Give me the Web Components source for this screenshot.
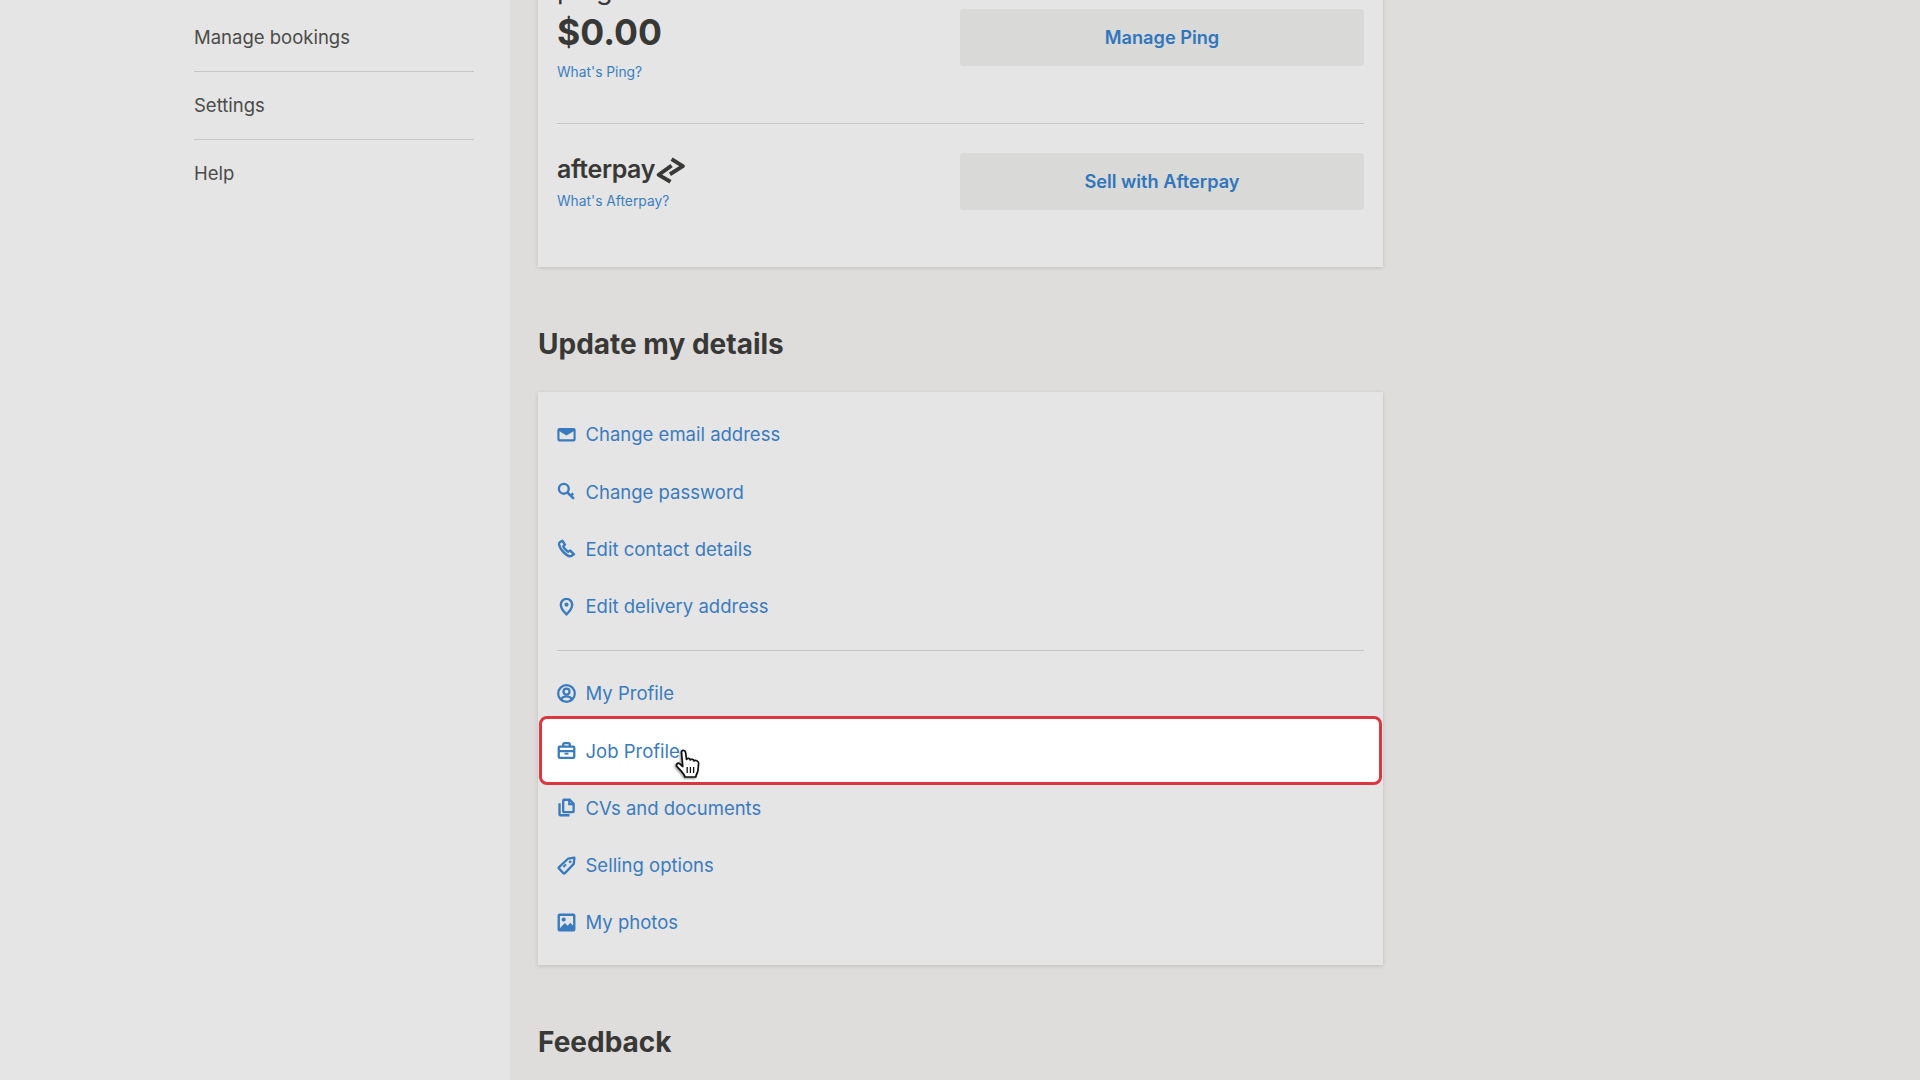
<!DOCTYPE html>
<html lang="en">
<head>
<meta charset="utf-8">
<title>Account</title>
<style>
  html, body { margin: 0; height: 1080px; overflow: hidden; background: #dedddb; }
  body { font-family: Inter, "Noto Sans", sans-serif; }
</style>
</head>
<body>
<account-page>
  <side-nav slot="side">
    <nav-item>Manage bookings</nav-item>
    <nav-item>Settings</nav-item>
    <nav-item>Help</nav-item>
  </side-nav>

  <pay-card>
    <pay-row help="What's Ping?" action="Manage Ping" first>
      <span slot="logo" class="ping">ping</span>
      <span slot="amount">$0.00</span>
    </pay-row>
    <pay-row help="What's Afterpay?" action="Sell with Afterpay">
      <afterpay-logo slot="logo"></afterpay-logo>
    </pay-row>
  </pay-card>

  <section-title>Update my details</section-title>

  <detail-card>
    <detail-link icon="mail">Change email address</detail-link>
    <detail-link icon="key">Change password</detail-link>
    <detail-link icon="phone">Edit contact details</detail-link>
    <detail-link icon="pin">Edit delivery address</detail-link>
    <detail-link slot="lower" icon="profile">My Profile</detail-link>
    <detail-link slot="lower" icon="job" highlighted>Job Profile<hand-cursor slot="over"></hand-cursor></detail-link>
    <detail-link slot="lower" icon="docs">CVs and documents</detail-link>
    <detail-link slot="lower" icon="tag">Selling options</detail-link>
    <detail-link slot="lower" icon="photo">My photos</detail-link>
  </detail-card>

  <section-title>Feedback</section-title>
</account-page>

<script>
const ICONS = {
  mail: '<rect x="1.8" y="5" width="20.4" height="14.4" rx="1.4" fill="none" stroke="currentColor" stroke-width="2.7"/><path d="M2 5h20v2.4l-10 5.8-10-5.8z" fill="currentColor"/>',
  key: '<circle cx="8.6" cy="8.6" r="6.2" fill="none" stroke="currentColor" stroke-width="3"/><path d="M13 13l8.4 8.4M17.4 17.4l3-3" fill="none" stroke="currentColor" stroke-width="3.2"/>',
  phone: '<path d="M6.8 2.2L3.4 4.2C1.8 5.6 2.8 10.2 6.8 15c4.2 5 9 7.6 11.4 6.4l3.2-2-4.6-4.8-2.6 1.6c-1.6-.6-5.4-4.4-6.2-7l2-2.2z" fill="none" stroke="currentColor" stroke-width="3" stroke-linejoin="round"/>',
  pin: '<path d="M12 22s-7.2-6.8-7.2-12.4a7.2 7.2 0 0 1 14.4 0C19.2 15.2 12 22 12 22z" fill="none" stroke="currentColor" stroke-width="3"/><circle cx="12" cy="9.6" r="2.6" fill="currentColor"/>',
  profile: '<circle cx="12" cy="12" r="10.5" fill="none" stroke="currentColor" stroke-width="2.8"/><circle cx="12" cy="9.6" r="3.8" fill="none" stroke="currentColor" stroke-width="2.8"/><path d="M5.2 19.6c1.2-3 3.8-4 6.8-4s5.6 1 6.8 4" fill="none" stroke="currentColor" stroke-width="2.8"/>',
  job: '<rect x="2.2" y="7" width="19.6" height="14.4" rx="1.4" fill="none" stroke="currentColor" stroke-width="2.9"/><path d="M7.8 7V4.6c0-1 .7-1.8 1.8-1.8h4.8c1.1 0 1.8.8 1.8 1.8V7M2.5 12.8h19" fill="none" stroke="currentColor" stroke-width="2.9"/><rect x="9.5" y="14.8" width="5" height="2.4" fill="currentColor"/>',
  docs: '<path d="M9 2.2h7l5 5V16.6a1.2 1.2 0 0 1-1.2 1.2H9a1.2 1.2 0 0 1-1.2-1.2V3.4A1.2 1.2 0 0 1 9 2.2z" fill="none" stroke="currentColor" stroke-width="2.9"/><path d="M15.4 2.6v5.2h5.2" fill="none" stroke="currentColor" stroke-width="2.7"/><path d="M3.2 6.6v14.2c0 .6.4 1 1 1h11.6" fill="none" stroke="currentColor" stroke-width="3"/>',
  tag: '<path d="M14.2 3.2L22 2l-.8 8L10 21.6c-.6.6-1.4.6-2 0L2.6 16c-.6-.6-.6-1.4 0-2z" fill="none" stroke="currentColor" stroke-width="2.9" stroke-linejoin="round"/><circle cx="16.6" cy="7.4" r="1.8" fill="currentColor"/><path d="M8 14l3.4-3.4" stroke="currentColor" stroke-width="2.6"/>',
  photo: '<rect x="2.2" y="2.2" width="19.6" height="19.6" rx="1" fill="none" stroke="currentColor" stroke-width="3"/><circle cx="8.4" cy="8.2" r="2.6" fill="currentColor"/><path d="M3 20l7-7.4 3.4 3.4 3.4-3.8 4.4 4.8V21H3z" fill="currentColor"/>'
};

class AccountPage extends HTMLElement {
  constructor() {
    super();
    this.attachShadow({ mode: 'open' }).innerHTML = `
      <style>
        :host {
          display: grid;
          grid-template-columns: 510px 1fr;
          height: 1080px;
          overflow: hidden;
          background: #dedddb;
          color: #383836;
        }
        .side { background: #e5e5e5; height: 1080px; }
        main { width: 845px; padding-left: 28px; margin-top: -40px; }
      </style>
      <div class="side"><slot name="side"></slot></div>
      <main><slot></slot></main>
    `;
  }
}

class SideNav extends HTMLElement {
  constructor() {
    super();
    this.attachShadow({ mode: 'open' }).innerHTML = `
      <style>
        :host { display: block; padding: 4px 36px 0 194px; }
        ::slotted(nav-item:last-child) { border-bottom: 0; }
      </style>
      <slot></slot>
    `;
  }
}

class NavItem extends HTMLElement {
  constructor() {
    super();
    this.attachShadow({ mode: 'open' }).innerHTML = `
      <style>
        :host {
          display: flex;
          align-items: center;
          box-sizing: border-box;
          height: 68px;
          padding-bottom: 2px;
          border-bottom: 1px solid #c6c6c4;
          font-size: 18.5px;
          color: #4b4b49;
        }
      </style>
      <slot></slot>
    `;
  }
}

class PayCard extends HTMLElement {
  constructor() {
    super();
    this.attachShadow({ mode: 'open' }).innerHTML = `
      <style>
        :host {
          display: block;
          box-sizing: border-box;
          height: 307px;
          padding: 12px 19px 0;
          background: #e5e5e5;
          box-shadow: 0 1px 4px rgba(0, 0, 0, 0.14);
        }
      </style>
      <slot></slot>
    `;
  }
}

class PayRow extends HTMLElement {
  constructor() {
    super();
    const first = this.hasAttribute('first');
    this.attachShadow({ mode: 'open' }).innerHTML = `
      <style>
        :host {
          display: grid;
          grid-template-columns: 1fr 404px;
          align-items: start;
        }
        :host([first]) { padding-bottom: 41px; border-bottom: 1px solid #c6c6c4; }
        :host(:not([first])) { padding-top: 29px; }
        ::slotted(.ping) {
          display: block;
          height: 39px;
          font-size: 27px;
          line-height: 36px;
          color: #383836;
        }
        ::slotted([slot="amount"]) {
          display: block;
          height: 44px;
          font-size: 35.5px;
          font-weight: 700;
          line-height: 44px;
          color: #383836;
        }
        .help {
          display: block;
          margin-top: 7px;
          font-size: 13.8px;
          line-height: 20px;
          color: #3a7fc4;
        }
        .action {
          display: flex;
          align-items: center;
          justify-content: center;
          box-sizing: border-box;
          height: 57px;
          padding-bottom: 2px;
          margin-top: ${first ? 37 : 0}px;
          border-radius: 3px;
          background: #d9d9d7;
          color: #3076bd;
          font-size: 18.2px;
          font-weight: 600;
        }
      </style>
      <div>
        <slot name="logo"></slot>
        <slot name="amount"></slot>
        <span class="help">${this.getAttribute('help')}</span>
      </div>
      <div class="action">${this.getAttribute('action')}</div>
    `;
  }
}

class AfterpayLogo extends HTMLElement {
  constructor() {
    super();
    this.attachShadow({ mode: 'open' }).innerHTML = `
      <style>
        :host {
          display: flex;
          align-items: center;
          height: 27px;
          margin-top: 4px;
          font-size: 25px;
          font-weight: 600;
          letter-spacing: -0.4px;
          color: #383836;
        }
        span { margin-top: -3px; }
        svg { display: block; flex: none; margin-left: 1px; }
      </style>
      <span>afterpay</span>
      <svg width="29" height="27" viewBox="0 0 27 25" fill="none" stroke="#383836" stroke-width="3.6" stroke-linejoin="round">
        <path d="M14.5 2L25 8.5 13 16"/>
        <path d="M14.5 8L2.5 16.5 13.5 23"/>
      </svg>
    `;
  }
}

class SectionTitle extends HTMLElement {
  constructor() {
    super();
    this.attachShadow({ mode: 'open' }).innerHTML = `
      <style>
        :host {
          display: block;
          margin: 57px 0 28px;
          font-size: 28px;
          font-weight: 700;
          line-height: 40px;
          color: #383836;
        }
      </style>
      <slot></slot>
    `;
  }
}

class DetailCard extends HTMLElement {
  constructor() {
    super();
    this.attachShadow({ mode: 'open' }).innerHTML = `
      <style>
        :host {
          display: block;
          box-sizing: border-box;
          height: 573px;
          padding: 13.6px 19px;
          background: #e5e5e5;
          box-shadow: 0 1px 4px rgba(0, 0, 0, 0.14);
        }
        hr { margin: 15.2px 0 13.6px; border: 0; border-top: 1px solid #c6c6c4; }
      </style>
      <slot></slot>
      <hr>
      <slot name="lower"></slot>
    `;
  }
}

class DetailLink extends HTMLElement {
  constructor() {
    super();
    this.attachShadow({ mode: 'open' }).innerHTML = `
      <style>
        :host {
          display: flex;
          position: relative;
          align-items: center;
          gap: 9.5px;
          height: 57.3px;
          font-size: 18.5px;
          color: #3a7bbf;
        }
        .ring { display: none; }
        :host([highlighted]) .ring {
          display: block;
          position: absolute;
          inset: -5.4px -18px -5.8px;
          box-sizing: border-box;
          border: 3px solid #dc3641;
          border-radius: 8px;
          background: #fff;
        }
        svg { display: block; flex: none; position: relative; }
        .label { position: relative; }
      </style>
      <div class="ring"></div>
      <svg width="19" height="19" viewBox="0 0 24 24">${ICONS[this.getAttribute('icon')]}</svg>
      <span class="label"><slot></slot></span>
      <slot name="over"></slot>
    `;
  }
}

class HandCursor extends HTMLElement {
  constructor() {
    super();
    this.attachShadow({ mode: 'open' }).innerHTML = `
      <style>
        :host { position: absolute; left: 118px; top: 27px; display: block; }
        svg { display: block; filter: drop-shadow(-1px 1px 1px rgba(0, 0, 0, 0.45)); }
      </style>
      <svg width="26" height="30" viewBox="0 0 26 30">
        <path d="M6.5 3.2C6.5 .8 10.2 .8 10.5 3.2L11.5 10.5C12 9 15 9 15.3 11C16 9.8 18.7 10 19 12C20 11 23.5 11.5 23.6 14L23 21C22.8 24 21 25 20.8 28L10 28C9.5 25 6 22 2 17.5C.5 15.5 3 13 5 15L7.8 17.5Z" fill="#fff" stroke="#111" stroke-width="1.7" stroke-linejoin="round"/>
        <path d="M12.2 18v6M15.4 18v6M18.6 18v6" stroke="#111" stroke-width="1.3"/>
      </svg>
    `;
  }
}

customElements.define('account-page', AccountPage);
customElements.define('side-nav', SideNav);
customElements.define('nav-item', NavItem);
customElements.define('pay-card', PayCard);
customElements.define('pay-row', PayRow);
customElements.define('afterpay-logo', AfterpayLogo);
customElements.define('section-title', SectionTitle);
customElements.define('detail-card', DetailCard);
customElements.define('detail-link', DetailLink);
customElements.define('hand-cursor', HandCursor);
</script>
</body>
</html>
